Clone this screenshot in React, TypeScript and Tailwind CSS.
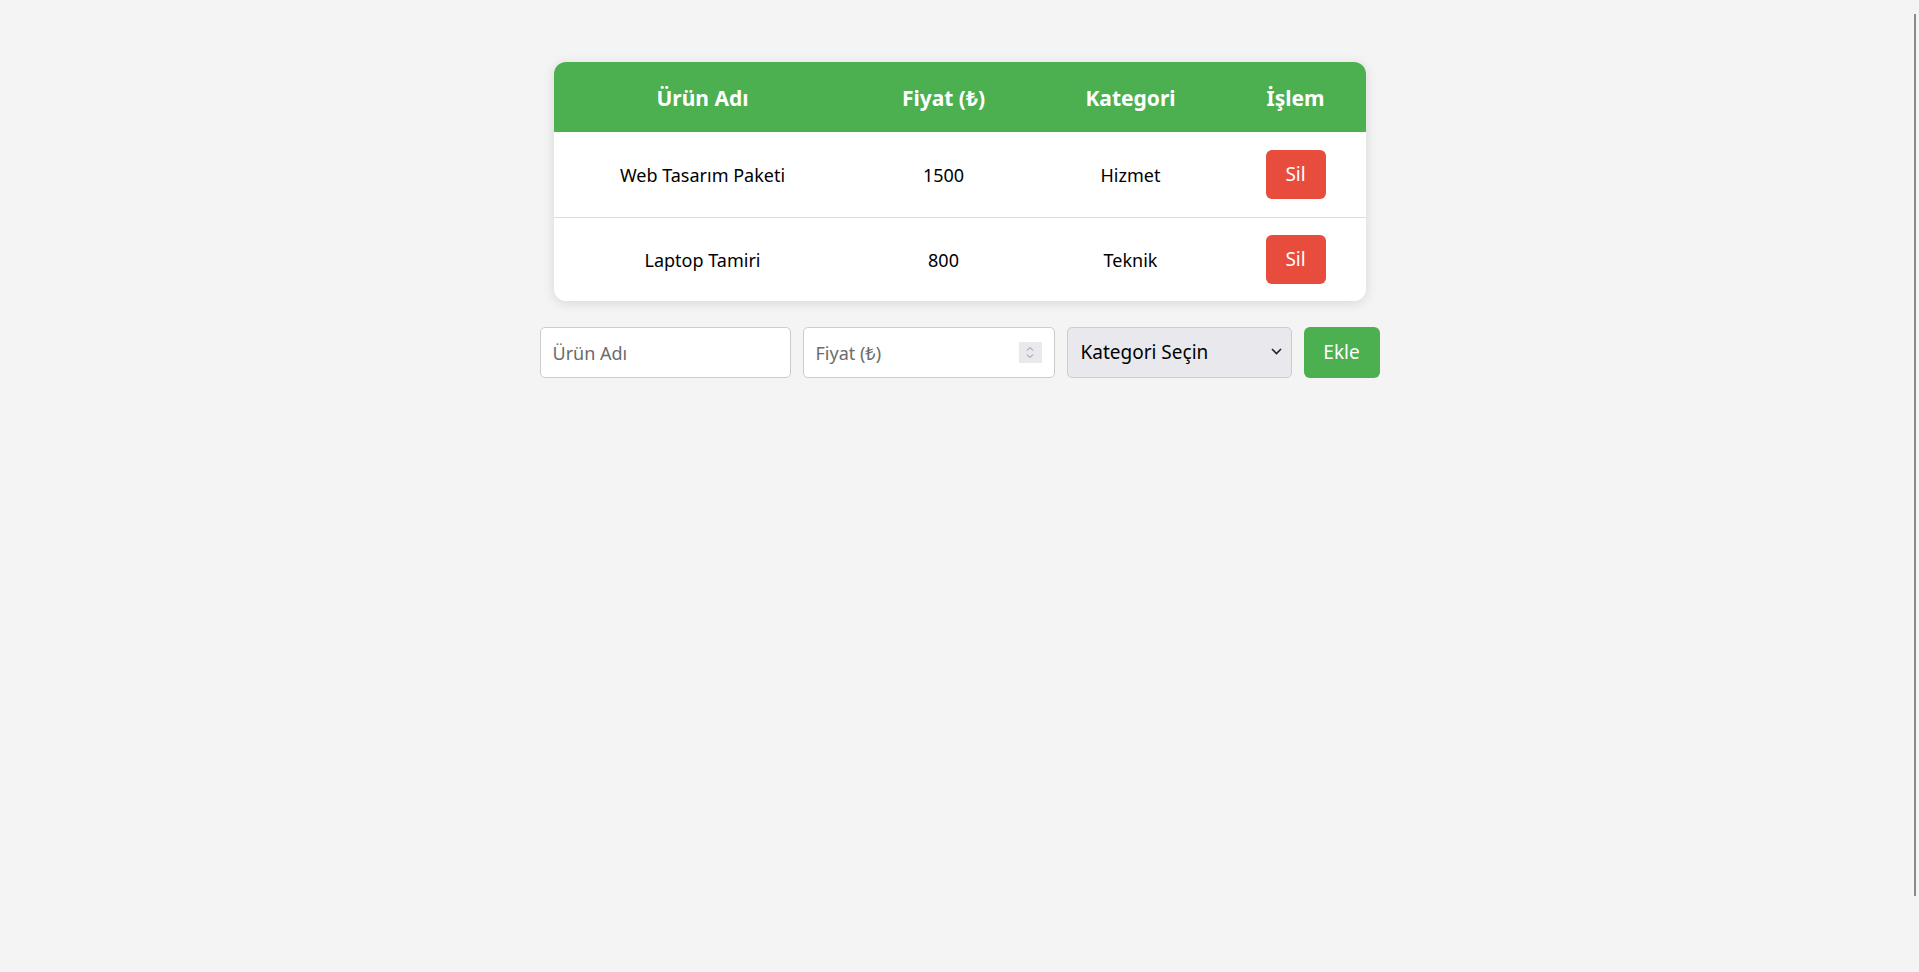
import { useState } from "react";

interface Urun {
  id: number;
  ad: string;
  fiyat: number;
  kategori: string;
}

const ilkUrunler: Urun[] = [
  { id: 1, ad: "Web Tasarım Paketi", fiyat: 1500, kategori: "Hizmet" },
  { id: 2, ad: "Laptop Tamiri", fiyat: 800, kategori: "Teknik" },
];

const App = () => {
  const [urunler, setUrunler] = useState<Urun[]>(ilkUrunler);
  const [ad, setAd] = useState("");
  const [fiyat, setFiyat] = useState("");
  const [kategori, setKategori] = useState("");

  const ekle = () => {
    if (!ad || !fiyat || !kategori) return;
    setUrunler([...urunler, { id: Date.now(), ad, fiyat: Number(fiyat), kategori }]);
    setAd("");
    setFiyat("");
    setKategori("");
  };

  return (
    <div
      className="min-h-screen bg-[#f4f4f4] text-black pt-[62px] flex flex-col items-center"
      style={{ fontFamily: '"Noto Sans", "Open Sans", sans-serif' }}
    >
      <div className="w-[812px] bg-white rounded-xl overflow-hidden shadow-[0_2px_12px_rgba(0,0,0,0.12)]">
        <table className="w-full border-collapse text-[18px]">
          <thead>
            <tr className="bg-[#4caf50] text-white h-[70px]">
              <th className="w-[298px] pt-[3px] font-bold text-[21px]">Ürün Adı</th>
              <th className="w-[184px] pt-[3px] font-bold text-[21px]">Fiyat (₺)</th>
              <th className="w-[190px] pt-[3px] font-bold text-[21px]">Kategori</th>
              <th className="w-[140px] pt-[3px] font-bold text-[21px]">İşlem</th>
            </tr>
          </thead>
          <tbody>
            {urunler.map((u, i) => (
              <tr key={u.id} className={i > 0 ? "border-t border-[#dddddd] h-[84px]" : "h-[85px]"}>
                <td className="text-center pt-[2px]">{u.ad}</td>
                <td className="text-center pt-[2px]">{u.fiyat}</td>
                <td className="text-center pt-[2px]">{u.kategori}</td>
                <td className="text-center">
                  <button
                    onClick={() => setUrunler(urunler.filter((x) => x.id !== u.id))}
                    className="w-[60px] h-[49px] rounded-md bg-[#e74c3c] text-white text-[19px]"
                  >
                    Sil
                  </button>
                </td>
              </tr>
            ))}
          </tbody>
        </table>
      </div>

      <div className="flex gap-3 mt-[26px] h-[51px]">
        <input
          value={ad}
          onChange={(e) => setAd(e.target.value)}
          placeholder="Ürün Adı"
          className="w-[251px] h-full rounded-[5px] border border-[#cccccc] bg-white px-3 text-[18px] placeholder:text-[#6b6b6b] outline-none"
        />
        <div className="relative w-[252px] h-full">
          <input
            value={fiyat}
            onChange={(e) => setFiyat(e.target.value)}
            placeholder="Fiyat (₺)"
            className="w-full h-full rounded-[5px] border border-[#cccccc] bg-white px-3 text-[18px] placeholder:text-[#6b6b6b] outline-none"
          />
          <span className="absolute right-[13px] top-[15px] w-[23px] h-[21px] bg-[#e9e9ed] flex flex-col items-center justify-center gap-[3px]">
            <svg width="8" height="5" viewBox="0 0 8 5" fill="none" stroke="#8a8a8a" strokeWidth="1">
              <path d="M1 4.5 L4 1.5 L7 4.5" />
            </svg>
            <svg width="8" height="5" viewBox="0 0 8 5" fill="none" stroke="#8a8a8a" strokeWidth="1">
              <path d="M1 0.5 L4 3.5 L7 0.5" />
            </svg>
          </span>
        </div>
        <div className="relative w-[225px] h-full">
          <select
            value={kategori}
            onChange={(e) => setKategori(e.target.value)}
            className="appearance-none w-full h-full rounded-[5px] border border-[#cccccc] bg-[#e9e9ed] pl-[13px] text-[19px] text-black outline-none"
          >
            <option value="">Kategori Seçin</option>
            <option value="Hizmet">Hizmet</option>
            <option value="Teknik">Teknik</option>
          </select>
          <svg
            className="absolute right-[10px] top-[21px] pointer-events-none"
            width="11"
            height="7"
            viewBox="0 0 11 7"
            fill="none"
            stroke="#222"
            strokeWidth="1.6"
          >
            <path d="M1 1 L5.5 5.5 L10 1" />
          </svg>
        </div>
        <button
          onClick={ekle}
          className="w-[76px] h-full rounded-md bg-[#4caf50] text-white text-[19px]"
        >
          Ekle
        </button>
      </div>

      <div className="fixed right-[3px] top-[14px] w-[2px] h-[882px] bg-[#8a8a8a]" />
    </div>
  );
};

export default App;
